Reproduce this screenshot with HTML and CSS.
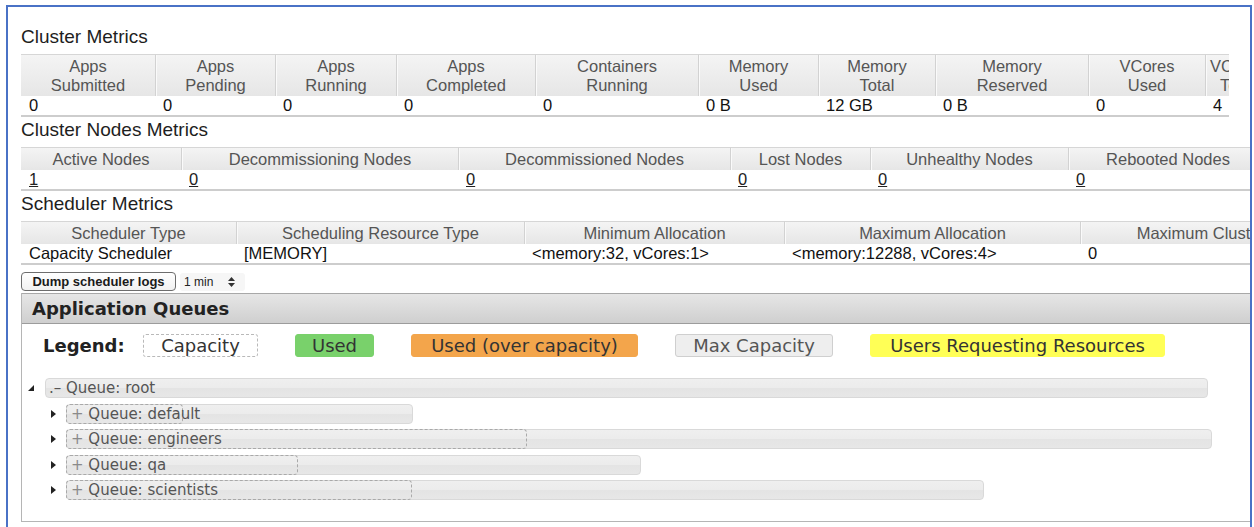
FILE: index.html
```html
<!DOCTYPE html>
<html lang="en">
<head>
<meta charset="utf-8">
<title>Scheduler</title>
<link rel="stylesheet" href="styles.css">
</head>
<body>
<div class="frame">
  <h3 class="section-title">Cluster Metrics</h3>
  <div class="table-clip">
    <table class="metrics metrics-cluster">
      <thead>
        <tr>
          <th>Apps<br>Submitted</th>
          <th>Apps<br>Pending</th>
          <th>Apps<br>Running</th>
          <th>Apps<br>Completed</th>
          <th>Containers<br>Running</th>
          <th>Memory<br>Used</th>
          <th>Memory<br>Total</th>
          <th>Memory<br>Reserved</th>
          <th>VCores<br>Used</th>
          <th>VCores<br>Total</th>
          <th>VCores<br>Reserved</th>
        </tr>
      </thead>
      <tbody>
        <tr>
          <td>0</td><td>0</td><td>0</td><td>0</td><td>0</td>
          <td>0 B</td><td>12 GB</td><td>0 B</td><td>0</td><td>4</td><td>0</td>
        </tr>
      </tbody>
    </table>
  </div>

  <h3 class="section-title">Cluster Nodes Metrics</h3>
  <table class="metrics metrics-nodes">
    <thead>
      <tr>
        <th>Active Nodes</th>
        <th>Decommissioning Nodes</th>
        <th>Decommissioned Nodes</th>
        <th>Lost Nodes</th>
        <th>Unhealthy Nodes</th>
        <th>Rebooted Nodes</th>
        <th>Shutdown Nodes</th>
      </tr>
    </thead>
    <tbody>
      <tr>
        <td><a href="#">1</a></td>
        <td><a href="#">0</a></td>
        <td><a href="#">0</a></td>
        <td><a href="#">0</a></td>
        <td><a href="#">0</a></td>
        <td><a href="#">0</a></td>
        <td><a href="#">0</a></td>
      </tr>
    </tbody>
  </table>

  <h3 class="section-title">Scheduler Metrics</h3>
  <table class="metrics metrics-scheduler">
    <thead>
      <tr>
        <th>Scheduler Type</th>
        <th>Scheduling Resource Type</th>
        <th>Minimum Allocation</th>
        <th>Maximum Allocation</th>
        <th>Maximum Cluster Application Priority</th>
      </tr>
    </thead>
    <tbody>
      <tr>
        <td>Capacity Scheduler</td>
        <td>[MEMORY]</td>
        <td>&lt;memory:32, vCores:1&gt;</td>
        <td>&lt;memory:12288, vCores:4&gt;</td>
        <td>0</td>
      </tr>
    </tbody>
  </table>

  <div class="log-controls">
    <button class="dump-btn" type="button">Dump scheduler logs</button>
    <span class="interval">1 min
      <svg class="interval-arrows" width="7" height="10" viewBox="0 0 7 10">
        <polygon points="3.5,0 7,4 0,4" fill="#333"/>
        <polygon points="0,6 7,6 3.5,10" fill="#333"/>
      </svg>
    </span>
  </div>

  <div class="queues">
    <div class="queues-head">Application Queues</div>
    <div class="queues-body">
      <div class="legend">
        <span class="legend-label">Legend:</span>
        <span class="lg lg-capacity">Capacity</span>
        <span class="lg lg-used">Used</span>
        <span class="lg lg-over">Used (over capacity)</span>
        <span class="lg lg-max">Max Capacity</span>
        <span class="lg lg-users">Users Requesting Resources</span>
      </div>

      <ul class="tree">
        <li class="qrow qrow-root">
          <span class="toggle">
            <svg width="6" height="6" viewBox="0 0 6 6"><polygon points="6,0 6,6 0,6" fill="#222"/></svg>
          </span>
          <span class="qbar" style="width:1163px">
            <span class="qlabel">.– Queue: root</span>
          </span>
        </li>
        <li class="qrow qrow-child">
          <span class="toggle">
            <svg width="5" height="8" viewBox="0 0 5 8"><polygon points="0,0 5,4 0,8" fill="#222"/></svg>
          </span>
          <span class="qbar" style="width:347px">
            <span class="qcap" style="width:117px"></span>
            <span class="qlabel"><span class="qsign">+</span> Queue: default</span>
          </span>
        </li>
        <li class="qrow qrow-child">
          <span class="toggle">
            <svg width="5" height="8" viewBox="0 0 5 8"><polygon points="0,0 5,4 0,8" fill="#222"/></svg>
          </span>
          <span class="qbar" style="width:1146px">
            <span class="qcap" style="width:461px"></span>
            <span class="qlabel"><span class="qsign">+</span> Queue: engineers</span>
          </span>
        </li>
        <li class="qrow qrow-child">
          <span class="toggle">
            <svg width="5" height="8" viewBox="0 0 5 8"><polygon points="0,0 5,4 0,8" fill="#222"/></svg>
          </span>
          <span class="qbar" style="width:575px">
            <span class="qcap" style="width:232px"></span>
            <span class="qlabel"><span class="qsign">+</span> Queue: qa</span>
          </span>
        </li>
        <li class="qrow qrow-child">
          <span class="toggle">
            <svg width="5" height="8" viewBox="0 0 5 8"><polygon points="0,0 5,4 0,8" fill="#222"/></svg>
          </span>
          <span class="qbar" style="width:918px">
            <span class="qcap" style="width:346px"></span>
            <span class="qlabel"><span class="qsign">+</span> Queue: scientists</span>
          </span>
        </li>
      </ul>
    </div>
  </div>
</div>
</body>
</html>
```
FILE: styles.css
```css
html, body {
  margin: 0;
  padding: 0;
  overflow: hidden;
  background: #fff;
}

body {
  font-family: "Liberation Sans", Arial, Helvetica, sans-serif;
  color: #111;
}

/* outer window frame */
.frame {
  margin: 5px 0 0 6px;
  width: 1246px;
  height: 560px;
  box-sizing: border-box;
  border: 2px solid #4a72c6;
  padding: 17px 0 0 13px;
  overflow: hidden;
}

.section-title {
  margin: 0;
  padding: 2px 0 6px;
  font-size: 19px;
  line-height: 22px;
  font-weight: normal;
  color: #1e1e1e;
}

.table-clip {
  width: 1208px;
  overflow: hidden;
}

/* metric tables */
.metrics {
  border-collapse: separate;
  border-spacing: 0;
  table-layout: fixed;
  font-size: 16.5px;
}

.metrics th {
  box-sizing: border-box;
  padding: 2px 4px 1px;
  font-weight: normal;
  line-height: 19px;
  color: #555;
  text-align: center;
  white-space: nowrap;
  overflow: hidden;
  background: linear-gradient(#f4f4f4, #e6e6e6);
  border-top: 1px solid #d6d6d6;
  border-left: 1px solid #d2d2d2;
  box-shadow: inset 1px 0 0 #fafafa;
}

.metrics th:first-child {
  border-left: none;
  box-shadow: none;
}

.metrics td {
  padding: 0 8px;
  line-height: 19px;
  white-space: nowrap;
  overflow: hidden;
  border-bottom: 2px solid #cdcdcd;
  color: #111;
}

.metrics td a {
  color: #222;
  text-decoration: underline;
}

.metrics-cluster { width: 1368px; }
.metrics-cluster th:nth-child(1) { width: 134px; }
.metrics-cluster th:nth-child(2) { width: 120px; }
.metrics-cluster th:nth-child(3) { width: 121px; }
.metrics-cluster th:nth-child(4) { width: 139px; }
.metrics-cluster th:nth-child(5) { width: 163px; }
.metrics-cluster th:nth-child(6) { width: 120px; }
.metrics-cluster th:nth-child(7) { width: 117px; }
.metrics-cluster th:nth-child(8) { width: 153px; }
.metrics-cluster th:nth-child(9) { width: 117px; }
.metrics-cluster th:nth-child(10) { width: 64px; }
.metrics-cluster th:nth-child(11) { width: 120px; }

.metrics-nodes { width: 1426px; }
.metrics-nodes th:nth-child(1) { width: 160px; }
.metrics-nodes th:nth-child(2) { width: 277px; }
.metrics-nodes th:nth-child(3) { width: 272px; }
.metrics-nodes th:nth-child(4) { width: 140px; }
.metrics-nodes th:nth-child(5) { width: 198px; }
.metrics-nodes th:nth-child(6) { width: 199px; }
.metrics-nodes th:nth-child(7) { width: 180px; }

.metrics-scheduler { width: 1440px; }
.metrics-scheduler th:nth-child(1) { width: 215px; }
.metrics-scheduler th:nth-child(2) { width: 288px; }
.metrics-scheduler th:nth-child(3) { width: 260px; }
.metrics-scheduler th:nth-child(4) { width: 296px; }
.metrics-scheduler th:nth-child(5) { width: 381px; }

/* scheduler log controls */
.log-controls {
  display: flex;
  align-items: center;
  margin-top: 7px;
  height: 19px;
}

.dump-btn {
  box-sizing: border-box;
  height: 19px;
  width: 155px;
  padding: 0;
  font-family: "Liberation Sans", Arial, sans-serif;
  font-size: 13px;
  font-weight: bold;
  color: #1a1a1a;
  background: linear-gradient(#ffffff, #f1f1f1);
  border: 1px solid #6d6d6d;
  border-radius: 4px;
  line-height: 17px;
}

.interval {
  display: flex;
  align-items: center;
  gap: 15px;
  margin-left: 4px;
  height: 18px;
  padding: 0 10px 0 4px;
  font-size: 12px;
  color: #222;
  background: #f6f6f6;
  border-radius: 3px;
}

/* application queues panel */
.queues {
  margin-top: 2px;
  width: 1260px;
  border-left: 1px solid #b5b5b5;
  border-bottom: 1px solid #b5b5b5;
  font-family: "DejaVu Sans", Verdana, sans-serif;
}

.queues-head {
  box-sizing: border-box;
  height: 31px;
  padding: 1px 0 0 10px;
  line-height: 28px;
  font-size: 18px;
  font-weight: bold;
  color: #222;
  background: linear-gradient(#e6e6e6, #cfcfcf);
  border-top: 1px solid #a8a8a8;
  border-bottom: 1px solid #9c9c9c;
}

.queues-body {
  padding: 10px 0 21px;
}

.legend {
  display: flex;
  align-items: center;
  padding-left: 21px;
  height: 23px;
}

.legend-label {
  width: 100px;
  font-size: 18px;
  font-weight: bold;
  color: #222;
}

.lg {
  box-sizing: border-box;
  height: 23px;
  margin-right: 37px;
  font-size: 18px;
  line-height: 21px;
  text-align: center;
  color: #333;
  border: 1px solid transparent;
  border-radius: 3px;
}

.lg-capacity {
  width: 115px;
  border: 1px dashed #b9b9b9;
  background: #fff;
}

.lg-used {
  width: 79px;
  background: #79d16b;
  border-color: #79d16b;
}

.lg-over {
  width: 227px;
  background: #f3a54b;
  border-color: #f3a54b;
}

.lg-max {
  width: 158px;
  color: #555;
  background: #eeeeee;
  border-color: #cfcfcf;
}

.lg-users {
  width: 295px;
  background: #ffff56;
  border-color: #ffff56;
}

/* queue tree */
.tree {
  list-style: none;
  margin: 21px 0 0;
  padding: 0;
}

.qrow {
  display: flex;
  align-items: center;
  height: 20px;
  margin-bottom: 5.5px;
}

.qrow:last-child {
  margin-bottom: 0;
}

.qrow-root {
  padding-left: 6px;
}

.qrow-root .toggle {
  width: 17px;
}

.qrow-child {
  padding-left: 29px;
}

.qrow-child .toggle {
  width: 15px;
}

.toggle {
  display: flex;
  align-items: center;
  height: 20px;
}

.qbar {
  position: relative;
  box-sizing: border-box;
  height: 20px;
  border: 1px solid #d9d9d9;
  border-radius: 4px;
  background: linear-gradient(#efefef 0%, #ececec 48%, #e4e4e4 52%, #e7e7e7 100%);
}

.qcap {
  position: absolute;
  left: -1px;
  top: -1px;
  box-sizing: border-box;
  height: 20px;
  border: 1px dashed #a9a9a9;
  border-radius: 4px;
}

.qlabel {
  position: relative;
  display: block;
  padding-left: 3px;
  font-size: 15px;
  line-height: 18px;
  color: #555;
  white-space: nowrap;
}

.qrow-child .qlabel {
  padding-left: 4px;
}

.qsign {
  color: #8a8a8a;
}
```
